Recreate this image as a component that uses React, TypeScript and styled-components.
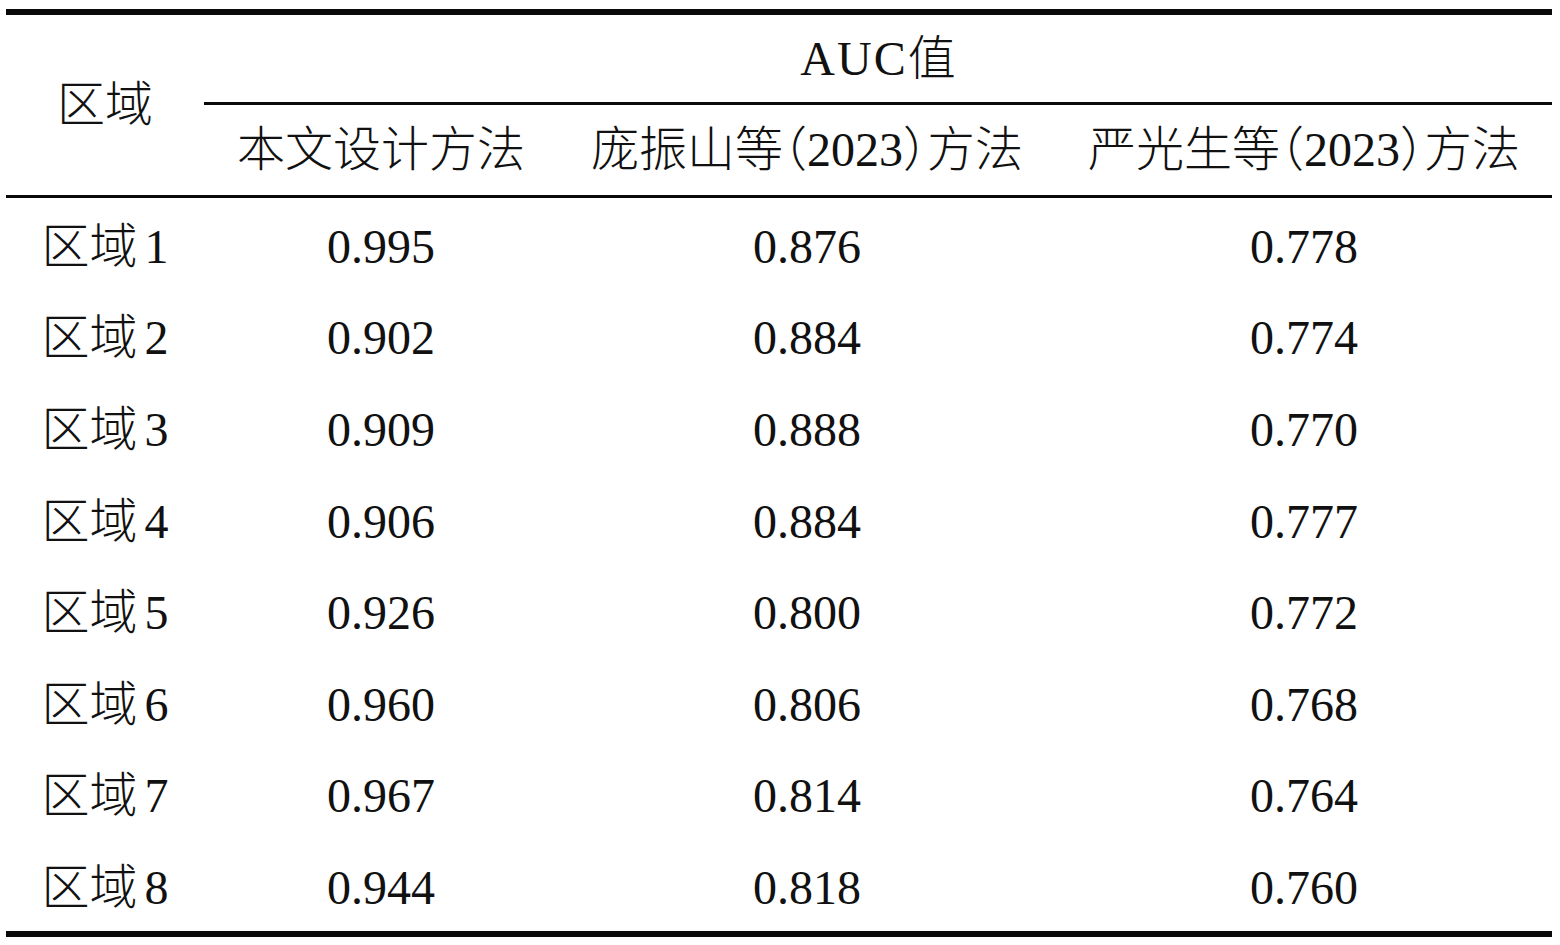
import React from "react";
import styled, { createGlobalStyle } from "styled-components";

const GlobalStyle = createGlobalStyle`
  html, body {
    margin: 0;
    padding: 0;
    background: #ffffff;
  }
  body {
    font-family: "Liberation Serif", "Noto Sans CJK SC", serif;
    color: #111111;
  }
`;

const Page = styled.div`
  padding: 9px 0 0 6px;
  width: 1560px;
  height: 945px;
  box-sizing: border-box;
  background: #ffffff;
`;

const Table = styled.div`
  width: 1546px;
  border-top: 6px solid #0a0a0a;
  border-bottom: 6px solid #0a0a0a;
  font-size: 48px;
  line-height: 48px;
  font-weight: 300;
  font-feature-settings: "halt";
`;

const COLS = "198px 354px 498px 496px";

const Header = styled.div`
  display: grid;
  grid-template-columns: ${COLS};
  grid-template-rows: 90px 90px;
  border-bottom: 3px solid #0a0a0a;
`;

const HeadCell = styled.div<{ $col: string; $row: string; $rule?: boolean }>`
  grid-column: ${(p) => p.$col};
  grid-row: ${(p) => p.$row};
  display: flex;
  align-items: center;
  justify-content: center;
  white-space: nowrap;
  box-sizing: border-box;
  border-bottom: ${(p) => (p.$rule ? "3px solid #0a0a0a" : "none")};
`;

const Latin = styled.span<{ $gap?: number }>`
  margin-left: ${(p) => p.$gap ?? 0}px;
  margin-right: ${(p) => p.$gap ?? 0}px;
  letter-spacing: 2px;
`;

const Body = styled.div`
  display: grid;
  grid-template-columns: ${COLS};
  grid-auto-rows: 91.6px;
`;

const Cell = styled.div`
  display: flex;
  align-items: center;
  justify-content: center;
  padding-top: 6px;
  box-sizing: border-box;
  white-space: nowrap;
`;

const RegionNo = styled.span`
  margin-left: 7px;
`;

const methods = ["本文设计方法", "庞振山等（2023）方法", "严光生等（2023）方法"];

const rows: [string, string, string, string][] = [
  ["1", "0.995", "0.876", "0.778"],
  ["2", "0.902", "0.884", "0.774"],
  ["3", "0.909", "0.888", "0.770"],
  ["4", "0.906", "0.884", "0.777"],
  ["5", "0.926", "0.800", "0.772"],
  ["6", "0.960", "0.806", "0.768"],
  ["7", "0.967", "0.814", "0.764"],
  ["8", "0.944", "0.818", "0.760"],
];

export default function App() {
  return (
    <>
      <GlobalStyle />
      <Page>
        <Table>
          <Header>
            <HeadCell $col="1" $row="1 / span 2">
              区域
            </HeadCell>
            <HeadCell $col="2 / span 3" $row="1" $rule>
              <Latin>AUC</Latin>值
            </HeadCell>
            {methods.map((m, i) => (
              <HeadCell key={m} $col={String(i + 2)} $row="2">
                {m}
              </HeadCell>
            ))}
          </Header>
          <Body>
            {rows.map((r) => (
              <React.Fragment key={r[0]}>
                <Cell>
                  区域<RegionNo>{r[0]}</RegionNo>
                </Cell>
                <Cell>{r[1]}</Cell>
                <Cell>{r[2]}</Cell>
                <Cell>{r[3]}</Cell>
              </React.Fragment>
            ))}
          </Body>
        </Table>
      </Page>
    </>
  );
}
